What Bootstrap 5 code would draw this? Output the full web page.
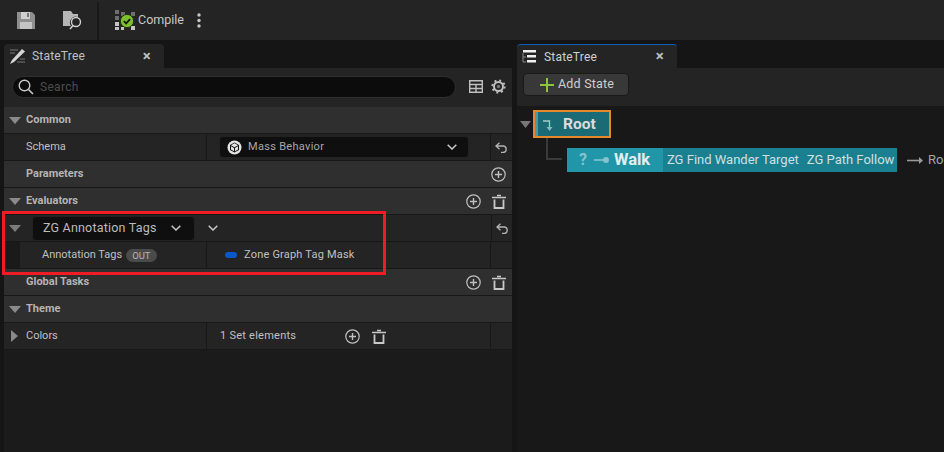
<!DOCTYPE html>
<html lang="en">
<head>
<meta charset="UTF-8" />
<title>StateTree</title>
<link href="https://cdn.jsdelivr.net/npm/bootstrap@5.3.3/dist/css/bootstrap.min.css" rel="stylesheet" />
<style>
  html, body { height: 100%; }
  body { background: #151515; color: #c0c0c0; font-family: Roboto, "Liberation Sans", sans-serif; font-size: 11px; overflow: hidden; }
  svg { display: block; flex: none; }
  .stage { position: relative; width: 944px; height: 452px; overflow: hidden; }
  .topbar { height: 40px; background: #242424; }
  .tool-btn { width: 48px; }
  .top-sep { width: 2px; height: 38px; background: #191919; margin: 1px 0 0 1px; }
  .compile-text { font-size: 12.5px; color: #c8c8c8; margin-left: 2px; }
  .dots { margin-left: 13px; }
  .panels { height: 412px; padding-left: 4px; }
  .left-panel { width: 508px; margin-right: 5px; }
  .right-panel { width: 427px; }
  .tab-strip { height: 28px; padding-top: 4px; background: #151515; }
  .ue-tab { height: 24px; background: #242424; border-radius: 4px 4px 0 0; color: #c0c0c0; font-size: 12px; letter-spacing: .2px; }
  .tab-left { width: 160px; padding: 0 13px 0 5px; }
  .tab-left .tab-label { margin-left: 6px; }
  .tab-right { width: 160px; padding: 0 13px 0 5px; border-top: 1px solid #0b5fb5; color: #d0d0d0; }
  .tab-right .tab-label { margin-left: 7px; }
  .tab-x { color: #bdbdbd; font-size: 15px; line-height: 1; font-weight: 700; }
  .panel-fill { height: 384px; background: #1b1b1b; }
  .search-row { height: 39px; background: #242424; padding: 0 4px 0 8px; }
  .search-box { width: 444px; height: 22px; background: #0c0c0c; border: 1px solid #2f2f2f; border-radius: 11px; padding-left: 5px; color: #4c4c4c; font-size: 12px; letter-spacing: .3px; margin-top: -2px; }
  .search-box svg { margin-right: 6px; }
  .grid-ico { margin-left: 13px; margin-top: -2px; }
  .gear-ico { margin-left: 8px; margin-top: -2px; }
  .prop-row { height: 27px; border-bottom: 1px solid #181818; background: #242424; }
  .head-row { background: #2f2f2f; font-weight: 700; color: #b4b4b4; }
  .caret-cell { width: 22px; flex: none; padding-left: 5px; }
  .caret-wide { width: 28px; }
  .caret-side { padding-left: 7px; }
  .row-name { width: 203px; flex: none; height: 100%; border-right: 1px solid #181818; }
  .row-value { width: 284px; flex: none; height: 100%; border-right: 1px solid #181818; padding-left: 12px; }
  .row-reset { flex: 1; height: 100%; padding-left: 4px; }
  .reset-box { width: 21px; height: 100%; margin-left: auto; padding-left: 4px; border-left: 1px solid #181818; }
  .head-label { flex: 1; }
  .label-indent { padding-left: 22px; }
  .head-actions { padding-right: 6px; gap: 11px; }
  .combo { height: 22px; background: #0f0f0f; border: 1px solid #222; border-radius: 4px; color: #a8a8a8; letter-spacing: .3px; flex: none; }
  .combo-schema { width: 250px; padding: 0 11px 0 7px; }
  .combo-schema svg:first-child { margin-right: 6px; }
  .combo-eval { width: 163px; height: 25px; padding: 0 13px 0 10px; font-size: 12.5px; color: #bcbcbc; letter-spacing: .2px; }
  .eval-more { margin-left: 13px; }
  .out-pill { background: #4b4b4b; color: #b5b5b5; border-radius: 8px; font-size: 9.5px; padding: 0 6px; line-height: 13px; margin-left: 4px; }
  .indent-strip { width: 16px; height: 100%; background: #1a1a1a; flex: none; }
  .blue-dot { width: 12px; height: 6px; border-radius: 3px; background: #0a57c9; margin-right: 7px; }
  .mask-value { padding-left: 18px; letter-spacing: .2px; }
  .set-value { padding-left: 13px; letter-spacing: .25px; }
  .set-plus { margin-left: 49px; }
  .set-trash { margin-left: 12px; }
  .tree-bar { height: 38px; background: #242424; padding-left: 6px; padding-top: 5px; }
  .add-btn { height: 23px; width: 106px; background: #383838; border: 1px solid #191919; border-radius: 4px; color: #cfcfcf; font-size: 12.5px; letter-spacing: .2px; padding: 0 0 0 16px; gap: 4px; }
  .tree-area { height: 346px; background: #181818; padding-top: 4px; }
  .root-line { height: 28px; padding-left: 2px; }
  .root-node { width: 78px; height: 28px; border: 2px solid #e58a2a; background: #1a6b75; margin-left: 2px; color: #dcdcdc; font-size: 15.500px; font-weight: 700; }
  .root-accent { width: 3px; height: 100%; background: #4d99a2; margin-right: 4px; }
  .root-label { margin-left: 8px; padding-top: 1px; }
  .tree-child { padding-left: 29px; height: 34px; }
  .elbow { width: 16px; height: 22px; border-left: 2px solid #3a3a3a; border-bottom: 2px solid #3a3a3a; margin-right: 5px; flex: none; }
  .walk-node { margin-top: 10px; height: 24px; width: 330px; flex: none; background: #1a7f8e; color: #cfe0e2; font-size: 13px; }
  .walk-head { width: 96px; height: 100%; background: #2096a8; color: #e2eeef; font-size: 16.500px; font-weight: 700; padding-left: 12px; flex: none; }
  .walk-q { color: #86c3cd; font-size: 16px; margin-right: 7px; }
  .walk-pin { margin-right: 5px; }
  .task-a { margin-left: 4px; }
  .task-b { margin-left: 8px; }
  .goto { margin-left: 10px; margin-top: 10px; height: 24px; color: #a6a6a6; font-size: 13px; gap: 5px; white-space: nowrap; }
  .red-mark { position: absolute; left: 2px; top: 211px; width: 384px; height: 64px; border: 3px solid #ee1c25; pointer-events: none; }
</style>
</head>
<body>
<div class="stage">

  <!-- toolbar -->
  <div class="topbar d-flex align-items-center">
    <div class="tool-btn d-flex justify-content-center ps-1">
      <svg width="20" height="20" viewBox="0 0 20 20"><path d="M1 2h15l3 3v14H1z" fill="#8f8f8f"/><rect x="5" y="2" width="9" height="7" fill="#d0d0d0"/><rect x="11" y="3" width="2" height="4" fill="#777"/><rect x="4" y="12" width="12" height="7" fill="#c4c4c4"/></svg>
    </div>
    <div class="tool-btn d-flex justify-content-center">
      <svg width="21" height="20" viewBox="0 0 21 20"><path d="M1 1h8l2 3h5v3a6 6 0 0 0-7 9H1z" fill="#b5b5b5"/><circle cx="14" cy="12" r="4.500" fill="none" stroke="#cfcfcf" stroke-width="1.400"/><path d="M11 15.500 8 19" stroke="#cfcfcf" stroke-width="1.600"/></svg>
    </div>
    <div class="top-sep"></div>
    <div class="d-flex align-items-center" style="margin-left:15px">
      <svg width="22" height="22" viewBox="0 0 22 22"><path d="M1 1h4v4H1zM7 3h4v4H7zM17 3h4v4h-4zM1 7h4v4H1z" fill="#6e6e6e"/><path d="M1 13h4v4H1zM1 18h4v3H1zM7 18h3v3H7zM17 17h4v4h-4z" fill="#c4c4c4"/><circle cx="13" cy="12" r="6.600" fill="#7cbf2e" stroke="#26320e"/><path d="M9.800 12l2.300 2.400 4-4.200" fill="none" stroke="#12160a" stroke-width="1.800"/></svg>
      <span class="compile-text">Compile</span>
      <svg class="dots" width="4" height="15" viewBox="0 0 4 15"><circle cx="2" cy="2" r="1.700" fill="#c8c8c8"/><circle cx="2" cy="7.500" r="1.700" fill="#c8c8c8"/><circle cx="2" cy="13" r="1.700" fill="#c8c8c8"/></svg>
    </div>
  </div>

  <div class="panels d-flex">
    <!-- details panel -->
    <div class="left-panel">
      <div class="tab-strip">
        <div class="ue-tab tab-left d-flex align-items-center">
          <svg width="17" height="17" viewBox="0 0 17 17"><path d="M1 2h8M1 5h5M8 14h8M11 11h5" stroke="#777" stroke-width="1"/><path d="M3 12 13 1l3 2.500L5 14l-4 2z" fill="#d6d6d6"/></svg>
          <span class="tab-label flex-grow-1">StateTree</span>
          <span class="tab-x">×</span>
        </div>
      </div>
      <div class="panel-fill">
        <div class="search-row d-flex align-items-center">
          <div class="search-box d-flex align-items-center">
            <svg width="16" height="16" viewBox="0 0 16 16"><circle cx="6.500" cy="6.500" r="5.300" fill="none" stroke="#c8c8c8" stroke-width="1.400"/><path d="M10.500 10.500 15 15" stroke="#c8c8c8" stroke-width="1.600"/></svg>
            <span>Search</span>
          </div>
          <svg class="grid-ico" width="14" height="13" viewBox="0 0 14 13"><path d="M.7.700h12.600v11.600H.7zM.7 4.500h12.600M.7 8.500h12.600M7 4.500v8" fill="none" stroke="#c0c0c0" stroke-width="1.400"/></svg>
          <svg class="gear-ico" width="15" height="15" viewBox="0 0 15 15"><circle cx="7.500" cy="7.500" r="4.500" fill="none" stroke="#c0c0c0" stroke-width="2"/><circle cx="7.500" cy="7.500" r="6.200" fill="none" stroke="#c0c0c0" stroke-width="1.800" stroke-dasharray="2 2.860"/><circle cx="7.500" cy="7.500" r="1.700" fill="#777"/></svg>
        </div>

        <div class="prop-row head-row d-flex align-items-center">
          <div class="caret-cell"><svg width="12" height="7" viewBox="0 0 12 7"><path d="M0 0h12L6 7z" fill="#8a8a8a"/></svg></div>
          <div class="head-label">Common</div>
        </div>
        <div class="prop-row d-flex align-items-center">
          <div class="row-name d-flex align-items-center"><span class="label-indent">Schema</span></div>
          <div class="row-value d-flex align-items-center">
            <div class="combo combo-schema d-flex align-items-center">
              <svg width="15" height="15" viewBox="0 0 15 15"><circle cx="7.500" cy="7.500" r="7" fill="#e4e4e4"/><path d="M7.500 2.500 12 5v5l-4.500 2.500L3 10V5z" fill="#111"/><path d="M4 5.200 7.500 7.200 11 5.200 7.500 3.300zM4 6.200l3 1.700v3.400L4 9.600zM11 6.200 8 7.900v3.400l3-1.700z" fill="#e4e4e4"/></svg>
              <span class="flex-grow-1">Mass Behavior</span>
              <svg width="10" height="6" viewBox="0 0 10 6"><path d="M.7.700 5 5 9.300.700" fill="none" stroke="#c8c8c8" stroke-width="1.500"/></svg>
            </div>
          </div>
          <div class="row-reset d-flex align-items-center"><svg width="13" height="11" viewBox="0 0 13 11"><path d="M4.500.7 1 4l3.500 3.300M1 4h7.500a3.300 3.300 0 0 1 0 6.500H6" fill="none" stroke="#b4b4b4" stroke-width="1.300"/></svg></div>
        </div>
        <div class="prop-row head-row d-flex align-items-center">
          <div class="head-label label-indent">Parameters</div>
          <div class="head-actions d-flex align-items-center"><svg width="15" height="15" viewBox="0 0 15 15"><circle cx="7.500" cy="7.500" r="6.700" fill="none" stroke="#c0c0c0" stroke-width="1.200"/><path d="M7.500 4v7M4 7.500h7" stroke="#c0c0c0" stroke-width="1.400"/></svg></div>
        </div>
        <div class="prop-row head-row d-flex align-items-center">
          <div class="caret-cell"><svg width="12" height="7" viewBox="0 0 12 7"><path d="M0 0h12L6 7z" fill="#8a8a8a"/></svg></div>
          <div class="head-label">Evaluators</div>
          <div class="head-actions d-flex align-items-center">
            <svg width="15" height="15" viewBox="0 0 15 15"><circle cx="7.500" cy="7.500" r="6.700" fill="none" stroke="#c0c0c0" stroke-width="1.200"/><path d="M7.500 4v7M4 7.500h7" stroke="#c0c0c0" stroke-width="1.400"/></svg>
            <svg width="14" height="15" viewBox="0 0 14 15"><path d="M5 1.500h4M0 3.500h14" stroke="#c8c8c8" stroke-width="1.600"/><path d="M2.500 5.500V14h9V5.500" fill="none" stroke="#c8c8c8" stroke-width="1.800"/></svg>
          </div>
        </div>
        <div class="prop-row d-flex align-items-center">
          <div class="caret-cell caret-wide"><svg width="12" height="7" viewBox="0 0 12 7"><path d="M0 0h12L6 7z" fill="#7c7c7c"/></svg></div>
          <div class="combo combo-eval d-flex align-items-center">
            <span class="flex-grow-1">ZG Annotation Tags</span>
            <svg width="10" height="6" viewBox="0 0 10 6"><path d="M.7.700 5 5 9.300.700" fill="none" stroke="#c8c8c8" stroke-width="1.500"/></svg>
          </div>
          <svg class="eval-more" width="10" height="6" viewBox="0 0 10 6"><path d="M.7.700 5 5 9.300.700" fill="none" stroke="#c8c8c8" stroke-width="1.500"/></svg>
          <div class="reset-box d-flex align-items-center"><svg width="13" height="11" viewBox="0 0 13 11"><path d="M4.500.7 1 4l3.500 3.300M1 4h7.500a3.300 3.300 0 0 1 0 6.500H6" fill="none" stroke="#b4b4b4" stroke-width="1.300"/></svg></div>
        </div>
        <div class="prop-row d-flex align-items-center">
          <div class="row-name d-flex align-items-center">
            <div class="indent-strip"></div>
            <span class="label-indent">Annotation Tags</span><span class="out-pill">OUT</span>
          </div>
          <div class="row-value mask-value d-flex align-items-center"><span class="blue-dot"></span><span>Zone Graph Tag Mask</span></div>
          <div class="row-reset"></div>
        </div>
        <div class="prop-row head-row d-flex align-items-center">
          <div class="head-label label-indent">Global Tasks</div>
          <div class="head-actions d-flex align-items-center">
            <svg width="15" height="15" viewBox="0 0 15 15"><circle cx="7.500" cy="7.500" r="6.700" fill="none" stroke="#c0c0c0" stroke-width="1.200"/><path d="M7.500 4v7M4 7.500h7" stroke="#c0c0c0" stroke-width="1.400"/></svg>
            <svg width="14" height="15" viewBox="0 0 14 15"><path d="M5 1.500h4M0 3.500h14" stroke="#c8c8c8" stroke-width="1.600"/><path d="M2.500 5.500V14h9V5.500" fill="none" stroke="#c8c8c8" stroke-width="1.800"/></svg>
          </div>
        </div>
        <div class="prop-row head-row d-flex align-items-center">
          <div class="caret-cell"><svg width="12" height="7" viewBox="0 0 12 7"><path d="M0 0h12L6 7z" fill="#8a8a8a"/></svg></div>
          <div class="head-label">Theme</div>
        </div>
        <div class="prop-row d-flex align-items-center">
          <div class="row-name d-flex align-items-center">
            <div class="caret-cell caret-side"><svg width="7" height="12" viewBox="0 0 7 12"><path d="M0 0v12l7-6z" fill="#8a8a8a"/></svg></div>
            <span>Colors</span>
          </div>
          <div class="row-value set-value d-flex align-items-center">
            <span>1 Set elements</span>
            <svg class="set-plus" width="15" height="15" viewBox="0 0 15 15"><circle cx="7.500" cy="7.500" r="6.700" fill="none" stroke="#c0c0c0" stroke-width="1.200"/><path d="M7.500 4v7M4 7.500h7" stroke="#c0c0c0" stroke-width="1.400"/></svg>
            <svg class="set-trash" width="14" height="15" viewBox="0 0 14 15"><path d="M5 1.500h4M0 3.500h14" stroke="#c8c8c8" stroke-width="1.600"/><path d="M2.500 5.500V14h9V5.500" fill="none" stroke="#c8c8c8" stroke-width="1.800"/></svg>
          </div>
          <div class="row-reset"></div>
        </div>
      </div>
    </div>

    <!-- tree panel -->
    <div class="right-panel">
      <div class="tab-strip">
        <div class="ue-tab tab-right d-flex align-items-center">
          <svg width="15" height="15" viewBox="0 0 15 15"><path d="M1 4v9M1 8h3M1 13h3" stroke="#888" stroke-width="1" fill="none"/><path d="M1 1h13v2.500H1zM5 6h9v2.500H5zM5 11h9v2.500H5z" fill="#f0f0f0"/></svg>
          <span class="tab-label flex-grow-1">StateTree</span>
          <span class="tab-x">×</span>
        </div>
      </div>
      <div class="tree-bar">
        <button type="button" class="btn add-btn d-flex align-items-center">
          <svg width="14" height="14" viewBox="0 0 14 14"><path d="M7 0v14M0 7h14" stroke="#8cc63f" stroke-width="2"/></svg>
          <span>Add State</span>
        </button>
      </div>
      <div class="tree-area">
        <div class="root-line d-flex align-items-center">
          <svg width="12" height="7" viewBox="0 0 12 7"><path d="M1 0h11L6.500 7z" fill="#777"/></svg>
          <div class="root-node d-flex align-items-center">
            <div class="root-accent"></div>
            <svg width="13" height="13" viewBox="0 0 13 13"><path d="M1 3h6.500v7" fill="none" stroke="#a8c8cc" stroke-width="1.300"/><path d="M4.500 9h6L7.500 13z" fill="#8fb8bd"/></svg>
            <span class="root-label">Root</span>
          </div>
        </div>
        <div class="tree-child d-flex">
          <div class="elbow"></div>
          <div class="walk-node d-flex align-items-center">
            <div class="walk-head d-flex align-items-center">
              <span class="walk-q">?</span>
              <svg class="walk-pin" width="15" height="6" viewBox="0 0 15 6"><path d="M0 3h10" stroke="#86c3cd" stroke-width="1.600"/><circle cx="12" cy="3" r="3" fill="#86c3cd"/></svg>
              <span>Walk</span>
            </div>
            <span class="task-a">ZG Find Wander Target</span>
            <span class="task-b">ZG Path Follow</span>
          </div>
          <div class="goto d-flex align-items-center">
            <svg width="16" height="7" viewBox="0 0 16 7"><path d="M0 3.500h14" stroke="#999" stroke-width="1.600"/><path d="M12 0l4 3.500L12 7z" fill="#999"/></svg>
            <span>Root</span>
          </div>
        </div>
      </div>
    </div>
  </div>

  <!-- annotation drawn over the screenshot -->
  <div class="red-mark"></div>
</div>
<script src="https://cdn.jsdelivr.net/npm/bootstrap@5.3.3/dist/js/bootstrap.bundle.min.js"></script>
</body>
</html>
